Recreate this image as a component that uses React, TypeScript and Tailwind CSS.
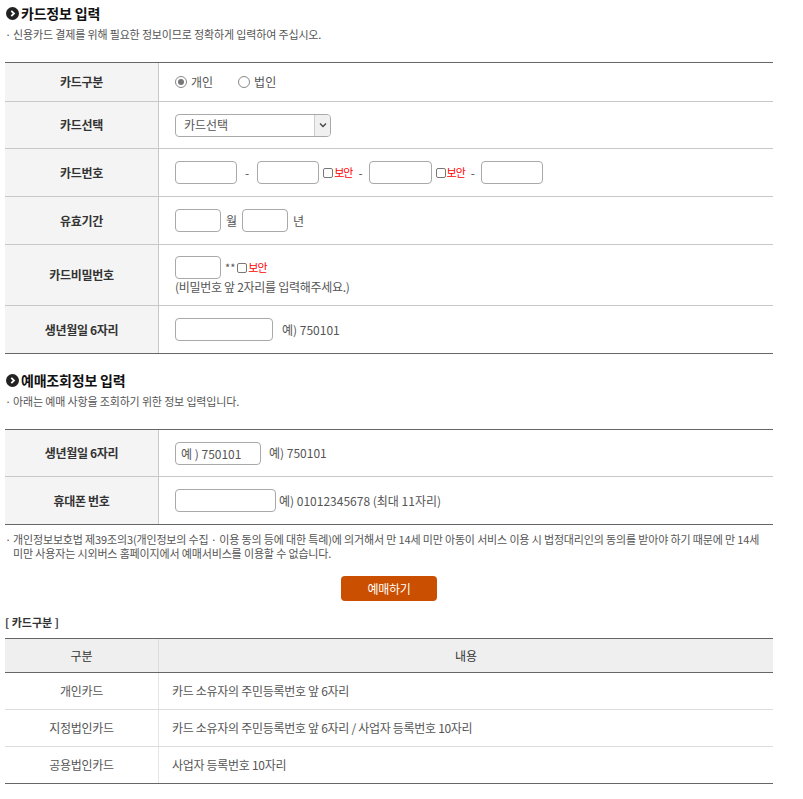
import React from "react";

const font = { fontFamily: '"Noto Sans CJK KR", "Noto Sans", sans-serif' };

function TitleIcon() {
  return (
    <svg width="13" height="13" viewBox="0 0 13 13" className="mr-[2px] shrink-0">
      <circle cx="6.5" cy="6.5" r="6.5" fill="#222" />
      <path d="M5.3 3.8 L8 6.5 L5.3 9.2" stroke="#fff" strokeWidth="1.8" fill="none" />
    </svg>
  );
}

function SectionTitle({ title, desc }: { title: string; desc: React.ReactNode }) {
  return (
    <div>
      <div className="flex items-center h-[18px] pl-[1px]">
        <TitleIcon />
        <span className="text-[14px] font-bold text-[#111] leading-[18px] tracking-[-0.2px]">{title}</span>
      </div>
      <p className="mt-[5px] h-[14px] text-[11px] leading-[14px] text-[#555] tracking-[-0.15px] flex">
        <span className="w-[8px] shrink-0">·</span>
        <span>{desc}</span>
      </p>
    </div>
  );
}

function Row({ label, h, children, last }: { label: string; h: string; children: React.ReactNode; last?: boolean }) {
  return (
    <div className={`flex ${h} ${last ? "" : "border-b border-[#c8c8c8]"}`}>
      <div className="w-[154px] shrink-0 bg-[#f4f4f4] border-r border-[#c8c8c8] flex items-center justify-center text-[12px] font-bold text-[#333] tracking-[-0.3px]">
        {label}
      </div>
      <div className="flex-1 pl-[16px] flex items-center text-[12px] text-[#555]">{children}</div>
    </div>
  );
}

function Box({ w, placeholder }: { w: string; placeholder?: string }) {
  return (
    <input
      type="text"
      placeholder={placeholder}
      className={`${w} h-[23px] border border-[#a9a9a9] rounded-[4px] bg-white px-[5px] text-[12px] text-[#555] placeholder:text-[#555] outline-none`}
    />
  );
}

function Check() {
  return <span className="inline-block w-[10px] h-[10px] border border-[#777] rounded-[2px] bg-white mr-[1px]" />;
}

function Secure() {
  return (
    <span className="flex items-center text-[11px] text-[#ff0000] tracking-[-1px]">
      <Check />
      보안
    </span>
  );
}

function Radio({ checked, label }: { checked?: boolean; label: string }) {
  return (
    <span className="flex items-center text-[12px] text-[#555]">
      <span className="w-[12px] h-[12px] rounded-full border border-[#888] bg-white flex items-center justify-center mr-[4px]">
        {checked && <span className="w-[6px] h-[6px] rounded-full bg-[#777]" />}
      </span>
      {label}
    </span>
  );
}

export default function App() {
  return (
    <div className="bg-white w-[803px] min-h-[799px] pl-[5px] pt-[4px]" style={font}>
      <div className="w-[768px]">
        <SectionTitle title="카드정보 입력" desc="신용카드 결제를 위해 필요한 정보이므로 정확하게 입력하여 주십시오." />

        <div className="mt-[21px] border-t border-b border-[#666]">
          <Row label="카드구분" h="h-[39px]">
            <div className="flex items-center gap-[25px]">
              <Radio checked label="개인" />
              <Radio label="법인" />
            </div>
          </Row>
          <Row label="카드선택" h="h-[47px]">
            <div className="w-[156px] h-[23px] border border-[#a9a9a9] rounded-[4px] flex items-stretch overflow-hidden">
              <span className="flex-1 pl-[8px] flex items-center text-[12px] text-[#555]">카드선택</span>
              <span className="w-[16px] bg-[#f0f0f0] border-l border-[#ccc] flex items-center justify-center">
                <svg width="8" height="6" viewBox="0 0 8 6">
                  <path d="M1 1.5 L4 4.5 L7 1.5" stroke="#444" strokeWidth="1.3" fill="none" />
                </svg>
              </span>
            </div>
          </Row>
          <Row label="카드번호" h="h-[48px]">
            <div className="flex items-center">
              <Box w="w-[62px]" />
              <span className="mx-[8px]">-</span>
              <Box w="w-[62px]" />
              <span className="ml-[4px]"><Secure /></span>
              <span className="mx-[6px]">-</span>
              <Box w="w-[63px]" />
              <span className="ml-[4px]"><Secure /></span>
              <span className="mx-[6px]">-</span>
              <Box w="w-[62px]" />
            </div>
          </Row>
          <Row label="유효기간" h="h-[48px]">
            <div className="flex items-center">
              <Box w="w-[46px]" />
              <span className="mx-[5px]">월</span>
              <Box w="w-[46px]" />
              <span className="ml-[5px]">년</span>
            </div>
          </Row>
          <Row label="카드비밀번호" h="h-[61px]">
            <div className="flex flex-col">
              <div className="flex items-center">
                <Box w="w-[46px]" />
                <span className="ml-[4px] mr-[2px] text-[11px]">**</span>
                <Secure />
              </div>
              <span className="text-[12px] leading-[14px] mt-[1px] tracking-[-0.3px]">(비밀번호 앞 2자리를 입력해주세요.)</span>
            </div>
          </Row>
          <Row label="생년월일 6자리" h="h-[47px]" last>
            <div className="flex items-center">
              <Box w="w-[98px]" />
              <span className="ml-[9px]">예) 750101</span>
            </div>
          </Row>
        </div>

        <div className="mt-[17px]">
          <SectionTitle title="예매조회정보 입력" desc="아래는 예매 사항을 조회하기 위한 정보 입력입니다." />
        </div>

        <div className="mt-[21px] border-t border-b border-[#666]">
          <Row label="생년월일 6자리" h="h-[47px]">
            <div className="flex items-center">
              <Box w="w-[86px]" placeholder="예 ) 750101" />
              <span className="ml-[8px]">예) 750101</span>
            </div>
          </Row>
          <Row label="휴대폰 번호" h="h-[47px]" last>
            <div className="flex items-center">
              <Box w="w-[101px]" />
              <span className="ml-[3px]">예) 01012345678 (최대 11자리)</span>
            </div>
          </Row>
        </div>

        <div className="mt-[7px] flex text-[11px] leading-[14px] text-[#555] tracking-[-0.15px]">
          <span className="w-[8px] shrink-0">·</span>
          <div>
            <p className="whitespace-nowrap">
              개인정보보호법 제39조의3(개인정보의 수집 · 이용 동의 등에 대한 특례)에 의거해서 만 14세 미만 아동이 서비스 이용 시 법정대리인의 동의를 받아야 하기 때문에 만 14세
            </p>
            <p>미만 사용자는 시외버스 홈페이지에서 예매서비스를 이용할 수 없습니다.</p>
          </div>
        </div>

        <div className="mt-[16px] flex justify-center">
          <button className="w-[96px] h-[25px] rounded-[4px] bg-[#cb4f00] text-white text-[12px] tracking-[-0.3px]">예매하기</button>
        </div>

        <p className="mt-[14px] h-[14px] text-[11px] leading-[14px] font-bold text-[#333]">[ 카드구분 ]</p>

        <div className="mt-[9px] border-t border-b border-[#666] text-[12px] text-[#555]">
          <div className="flex h-[34px] bg-[#efefef] border-b border-[#666] text-[#333]">
            <div className="w-[154px] border-r border-[#ddd] flex items-center justify-center">구분</div>
            <div className="flex-1 flex items-center justify-center">내용</div>
          </div>
          {[
            ["개인카드", "카드 소유자의 주민등록번호 앞 6자리"],
            ["지정법인카드", "카드 소유자의 주민등록번호 앞 6자리 / 사업자 등록번호 10자리"],
            ["공용법인카드", "사업자 등록번호 10자리"],
          ].map(([a, b], i) => (
            <div key={a} className={`flex ${i < 2 ? "h-[37px] border-b border-[#ddd]" : "h-[36px]"}`}>
              <div className="w-[154px] border-r border-[#e5e5e5] flex items-center justify-center tracking-[-0.3px]">{a}</div>
              <div className="flex-1 pl-[13px] flex items-center tracking-[-0.3px]">{b}</div>
            </div>
          ))}
        </div>
      </div>
    </div>
  );
}
